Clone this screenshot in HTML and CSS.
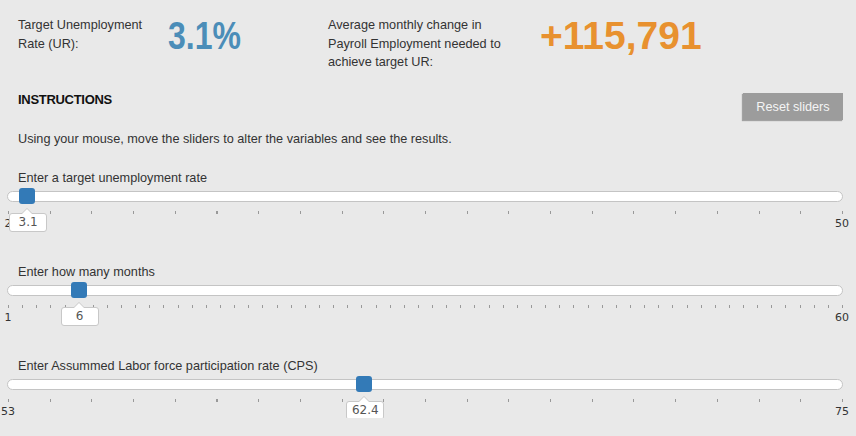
FILE: index.html
```html
<!DOCTYPE html>
<html lang="en">
<head>
<meta charset="UTF-8">
<title>Unemployment Target Calculator</title>
<link rel="stylesheet" href="styles.css">
</head>
<body>
<div class="page">
  <div class="summary">
    <div class="stat stat-ur">
      <div class="stat-label">Target Unemployment Rate (UR):</div>
      <div class="stat-value ur">3.1%</div>
    </div>
    <div class="stat">
      <div class="stat-label wide">Average monthly change in Payroll Employment needed to achieve target UR:</div>
      <div class="stat-value payroll">+115,791</div>
    </div>
  </div>

  <div class="instructions">
    <h3>INSTRUCTIONS</h3>
    <button class="reset">Reset sliders</button>
  </div>
  <p class="hint">Using your mouse, move the sliders to alter the variables and see the results.</p>

  <div class="slider">
    <label>Enter a target unemployment rate</label>
    <div class="track">
      <span class="thumb" style="left: calc(2.292% - 8px)"></span>
      <span class="bubble" style="left: calc(2.292% - 18px)">3.1</span>
    </div>
    <div class="ticks ticks-20"></div>
    <div class="scale"><span>2</span><span>50</span></div>
  </div>

  <div class="slider">
    <label>Enter how many months</label>
    <div class="track">
      <span class="thumb" style="left: calc(8.475% - 8px)"></span>
      <span class="bubble" style="left: calc(8.475% - 18px)">6</span>
    </div>
    <div class="ticks ticks-59"></div>
    <div class="scale"><span>1</span><span>60</span></div>
  </div>

  <div class="slider">
    <label>Enter Assummed Labor force participation rate (CPS)</label>
    <div class="track">
      <span class="thumb" style="left: calc(42.727% - 8px)"></span>
      <span class="bubble" style="left: calc(42.727% - 18px)">62.4</span>
    </div>
    <div class="ticks ticks-20"></div>
    <div class="scale"><span>53</span><span>75</span></div>
  </div>
</div>
</body>
</html>
```

FILE: styles.css
```css
body { margin: 0; background: #e9e9e9; color: #333;
       font-family: "Liberation Sans", Arial, sans-serif; }
.page { padding: 16px 13px 0 7px; }

/* results */
.summary { display: flex; align-items: flex-start; padding-left: 11px; }
.stat { display: flex; align-items: flex-start; }
.stat-ur { flex: 0 0 310px; }
.stat-label { width: 140px; margin-right: 10px; font-size: 12.7px; line-height: 18.5px; }
.stat-label.wide { width: 190px; margin-right: 22px; }
.stat-value { font-weight: bold; line-height: 1; }
.ur { font-size: 39px; color: #4b8db8; transform: scaleX(0.82); transform-origin: left top; }
.payroll { font-size: 39px; color: #e8912f; }

/* instructions */
.instructions { display: flex; justify-content: space-between; align-items: flex-start;
                margin-top: 20.5px; padding-left: 11px; }
.instructions h3 { margin: 0; font-size: 13px; line-height: 16px; color: #111; letter-spacing: -0.3px; }
.reset { width: 100px; height: 27px; margin-top: 1px; padding: 0; border: none; background: #9c9c9c; color: #f4f4f4;
         font: 12.7px "Liberation Sans", Arial, sans-serif; box-shadow: -1px 1px 1px rgba(0,0,0,0.3); }
.hint { margin: 11px 0 0 11px; font-size: 12.7px; line-height: 16px; }

/* sliders */
.slider { margin-top: 23px; }
.slider + .slider { margin-top: 34px; }
.slider label { display: block; margin: 0 0 5px 11px; font-size: 12.7px; line-height: 16px; }
.track { position: relative; height: 9px; border: 1px solid #c4c4c4; border-radius: 6px; background: #fff; }
.thumb { position: absolute; top: -4px; width: 16px; height: 16px; border-radius: 3px; background: #337ab7; }
.bubble { position: absolute; top: 21px; width: 38px; height: 19px; box-sizing: border-box;
          border: 1px solid #c8c8c8; border-radius: 3px; background: #fff; color: #555;
          font: 12px/17px "DejaVu Sans", Verdana, sans-serif; text-align: center; }
.bubble::before, .bubble::after { content: ""; position: absolute; left: 12px;
          border-left: 5px solid transparent; border-right: 5px solid transparent; }
.bubble::before { top: -6px; border-bottom: 5px solid #c8c8c8; }
.bubble::after { top: -5px; border-bottom: 5px solid #fff; }

.ticks { width: 835px; height: 3px; margin: 9px 0 0 1px; }
.ticks-20 { background: repeating-linear-gradient(to right, #999 0 1px, transparent 1px 41.7px); }
.ticks-59 { background: repeating-linear-gradient(to right, #999 0 1px, transparent 1px 14.136px); }
.scale { display: flex; justify-content: space-between; margin: 3px 1px 0;
         font: 11px/13px "DejaVu Sans", Verdana, sans-serif; color: #333; }
.scale span { width: 0; display: flex; justify-content: center; white-space: nowrap; }
```
